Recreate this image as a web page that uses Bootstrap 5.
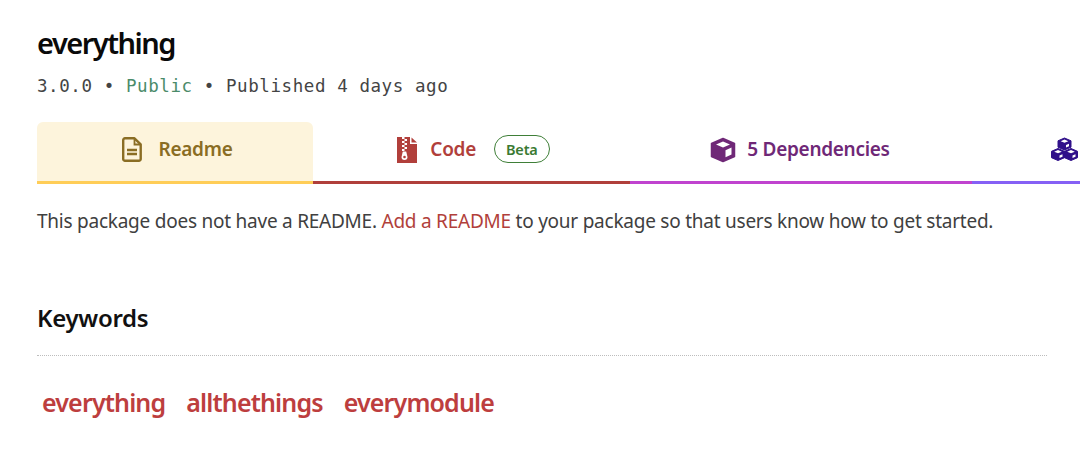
<!DOCTYPE html>
<html lang="en">
<head>
<meta charset="utf-8">
<title>everything</title>
<link href="https://cdn.jsdelivr.net/npm/bootstrap@5.3.0/dist/css/bootstrap.min.css" rel="stylesheet">
<style>
html, body { height: 100%; }
body { font-family: "Noto Sans", "Liberation Sans", sans-serif; background: #fff; overflow: hidden; color: #404040; }
.pkg-wrap { padding: 26px 0 0 37px; width: 1080px; overflow: hidden; }
.pkg-title { font-size: 29px; font-weight: 600; letter-spacing: -1.5px; color: #0a0a0a; line-height: 34px; margin: 0; }
.pkg-meta { font-family: "DejaVu Sans Mono", monospace; font-size: 17.5px; letter-spacing: .58px; color: #444; line-height: 24px; margin-top: 14px; margin-bottom: 0; }
.pkg-public { color: #4b8b6a; }
.tab-row { display: grid; grid-template-columns: 276px 317px 342px 200px; width: 1135px; margin-top: 24px; }
.pkg-tab { height: 62px; display: flex; align-items: center; justify-content: center; font-size: 19px; font-weight: 600; letter-spacing: -.3px; text-decoration: none; border-bottom: 3px solid; padding-bottom: 4px; }
.tab-readme { background: #fdf4dc; color: #8a6d24; border-color: #ffcd57; border-radius: 6px 6px 0 0; padding-left: 4px; }
.tab-code { color: #b13f3b; border-color: #b03f3b; padding-left: 4px; }
.tab-deps { color: #6f2877; border-color: #c043cf; padding-right: 2px; }
.tab-more { color: #30108a; border-color: #8560f5; justify-content: flex-start; padding-left: 79px; }
.tab-ico { display: block; flex: none; }
.ico-gap-r { margin-right: 17px; }
.ico-gap-c { margin-right: 13px; }
.ico-gap-d { margin-right: 11px; }
.beta-pill { border: 1.5px solid #3f7f38; border-radius: 15px; color: #3a7a33; font-size: 14.5px; font-weight: 600; line-height: 26px; padding: 0 11px; margin-left: 18px; margin-bottom: 2px; letter-spacing: -.2px; }
.readme-note { font-size: 19px; letter-spacing: -.24px; color: #404040; line-height: 28px; margin: 23px 0 0; }
.readme-note a { color: #b13f3b; text-decoration: none; }
.kw-head { font-size: 24px; font-weight: 600; letter-spacing: -.3px; color: #111; line-height: 30px; margin: 68px 0 0; padding-bottom: 22px; border-bottom: 1px dotted #bdbdbd; width: 1010px; }
.kw-list { display: flex; gap: 21px; padding: 29px 0 0 5px; }
.kw-list a { font-size: 25px; font-weight: 600; letter-spacing: -.85px; color: #bd3e3e; text-decoration: none; line-height: 34px; }
</style>
</head>
<body>
<main class="pkg-wrap">
  <h1 class="pkg-title">everything</h1>
  <p class="pkg-meta">3.0.0 • <span class="pkg-public">Public</span> • Published 4 days ago</p>
  <nav class="tab-row">
    <a class="pkg-tab tab-readme" href="#">
      <svg class="tab-ico ico-gap-r" width="20" height="25" viewBox="0 0 20 25" fill="none" stroke="currentColor" stroke-width="2.400"><path d="M3 1.300h9.500l6.200 6v14.700a1.800 1.800 0 0 1-1.800 1.800H3a1.800 1.800 0 0 1-1.800-1.800V3.100A1.800 1.800 0 0 1 3 1.300z" stroke-linejoin="round"/><path d="M12.500 2v5.500h6" stroke-width="1.800"/><path d="M5 13h10M5 17h10"/></svg>
      Readme
    </a>
    <a class="pkg-tab tab-code" href="#">
      <svg class="tab-ico ico-gap-c" width="20" height="26" viewBox="0 0 20 26"><path fill="currentColor" d="M0 0h13v7h7v19H0z"/><path fill="currentColor" d="M14.500 0.500 20 5.500h-5.500z"/><path fill="#fff" d="M5 0h2.500v2H5zM7.500 2H10v2H7.500zM5 4h2.500v2H5zM7.500 6H10v2H7.500zM5 8h2.500v2H5zM7.500 10H10v2H7.500zM5 12h2.500v2H5z"/><path fill="#fff" d="M5.800 14.500h3.400l1.300 5.500a3 3 0 1 1-6 0z"/><circle cx="7.500" cy="20" r="1.300" fill="currentColor"/></svg>
      Code
      <span class="beta-pill">Beta</span>
    </a>
    <a class="pkg-tab tab-deps" href="#">
      <svg class="tab-ico ico-gap-d" width="26" height="26" viewBox="0 0 26 26"><path fill="currentColor" stroke="currentColor" stroke-width="1.500" stroke-linejoin="round" d="M13 1.500 24.500 6.500v13L13 24.500 1.500 19.500v-13z"/><path fill="#fff" d="M13 4.500 20 7.500 13 10.500 6 7.500z"/><path fill="#fff" d="M15.500 13.200 21.500 10.600v7L15.500 20.200z"/></svg>
      5 Dependencies
    </a>
    <a class="pkg-tab tab-more" href="#" aria-label="Dependents">
      <svg class="tab-ico" width="27" height="25" viewBox="0 0 27 25"><g fill="currentColor" stroke="currentColor" stroke-width="1" stroke-linejoin="round"><path d="M13.500 1l6.500 2.800v6.400L13.500 13 7 10.200V3.800z"/><path d="M7 11.500l6.500 2.800v6.400L7 23.500.5 20.700v-6.400z"/><path d="M20 11.500l6.500 2.800v6.400L20 23.500l-6.500-2.800v-6.400z"/></g><g fill="#fff"><path d="M13.500 2.600l3.800 1.600-3.800 1.600-3.800-1.600zM7 13.100l3.800 1.600L7 16.300l-3.800-1.600zM20 13.100l3.800 1.600L20 16.300l-3.800-1.600z"/><path d="M15 8l3-1.300v2.500L15 10.500zM8.500 18.500l3-1.300v2.500l-3 1.300zM21.500 18.500l3-1.300v2.500l-3 1.300z"/></g></svg>
    </a>
  </nav>
  <p class="readme-note">This package does not have a README. <a href="#">Add a README</a> to your package so that users know how to get started.</p>
  <h2 class="kw-head">Keywords</h2>
  <div class="kw-list"><a href="#">everything</a><a href="#">allthethings</a><a href="#">everymodule</a></div>
</main>
<script src="https://cdn.jsdelivr.net/npm/bootstrap@5.3.0/dist/js/bootstrap.bundle.min.js"></script>
</body>
</html>
